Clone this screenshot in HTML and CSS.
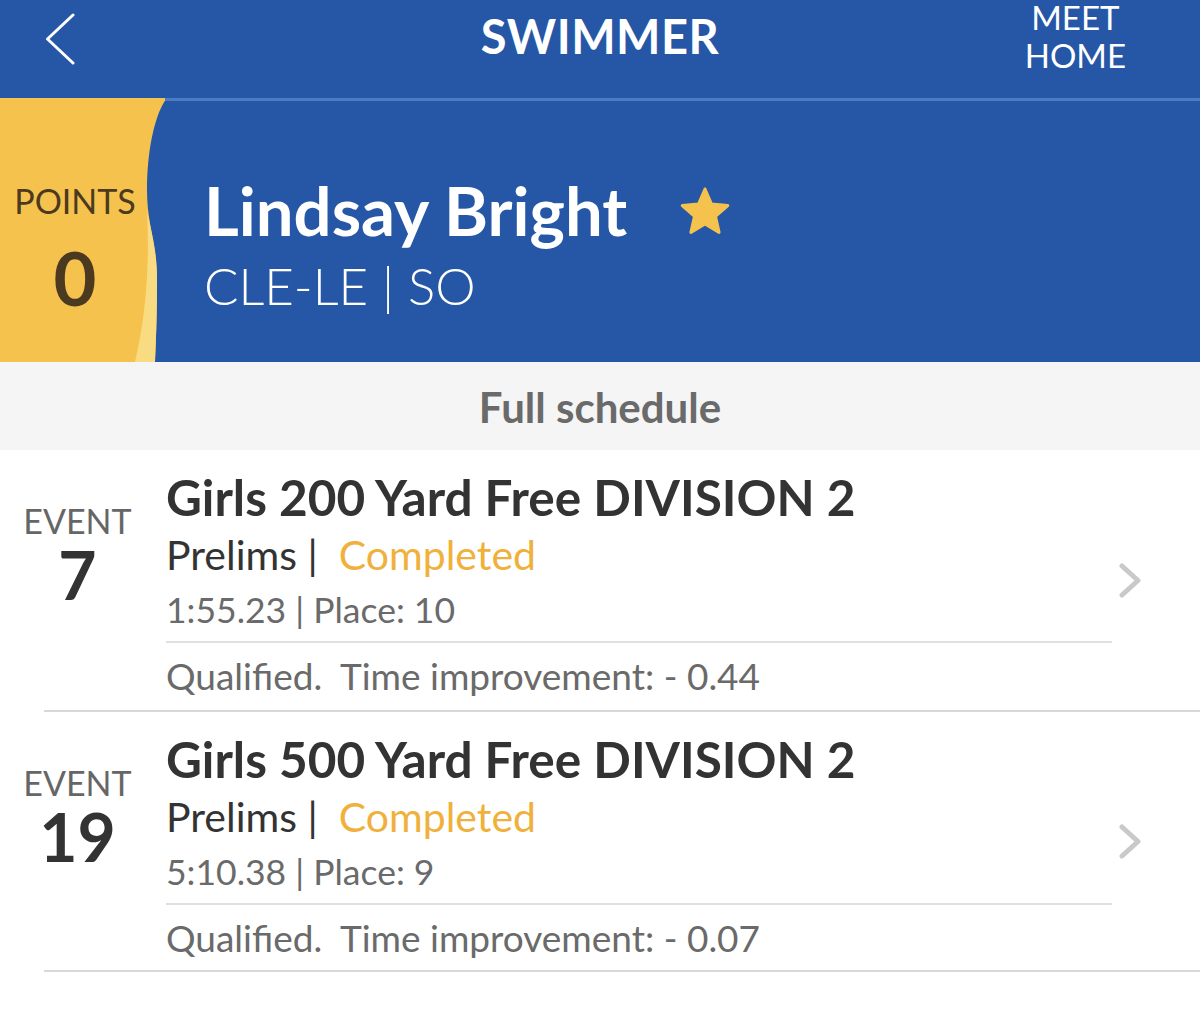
FILE: index.html
```html
<!DOCTYPE html>
<html lang="en">
<head>
  <meta charset="UTF-8" />
  <meta name="viewport" content="width=device-width, initial-scale=1.0"/>
  <title>Swimmer</title>
  <link rel="stylesheet" href="styles.css">
</head>
<body>

  <header class="topbar">
    <a class="back" href="#">
      <svg width="32" height="54" viewBox="0 0 32 54">
        <polyline points="29,2 3.5,26 29,50" fill="none" stroke="#fff" stroke-width="3" stroke-linecap="round" stroke-linejoin="round"/>
      </svg>
    </a>
    <h1 class="title">SWIMMER</h1>
    <a class="meet-home" href="#">MEET<br>HOME</a>
  </header>

  <section class="hero">
    <div class="points">
      <svg class="points-bg" width="165" height="264" viewBox="0 0 165 264">
        <path d="M0,0 H167 C155,15 147,52 147,92 C147,127 157,147 157,182 C157,217 156,242 155,264 H0 Z" fill="#f5c24e"/>
        <path d="M147,112 C152,137 157,152 157,182 C157,217 156,242 155,264 H135 C145,222 150,172 147,112 Z" fill="#f9dc82"/>
      </svg>
      <div class="points-label">POINTS</div>
      <div class="points-value">0</div>
    </div>
    <div class="swimmer">
      <div class="swimmer-name">
        Lindsay Bright
        <svg class="star" width="52" height="50" viewBox="0 0 52 50">
          <polygon points="26,2 32.5,17.1 48.8,18.6 36.5,29.4 40.1,45.4 26,37 11.9,45.4 15.5,29.4 3.2,18.6 19.5,17.1" fill="#f5c24e" stroke="#f5c24e" stroke-width="3" stroke-linejoin="round"/>
        </svg>
      </div>
      <div class="swimmer-team">CLE-LE | SO</div>
    </div>
  </section>

  <div class="schedule-bar">Full schedule</div>

  <ul class="events">
    <li class="event">
      <div class="event-num">
        <div class="event-label">EVENT</div>
        <div class="event-value">7</div>
      </div>
      <div class="event-info">
        <div class="event-title">Girls 200 Yard Free DIVISION 2</div>
        <div class="event-status">Prelims |&nbsp; <span class="done">Completed</span></div>
        <div class="event-time">1:55.23 | Place: 10</div>
        <div class="event-note">Qualified.&nbsp; Time improvement: - 0.44</div>
      </div>
      <div class="event-go">
        <svg width="26" height="36" viewBox="0 0 26 36">
          <polyline points="5,3 21,17.5 5,32" fill="none" stroke="#c9c9c9" stroke-width="5" stroke-linecap="round" stroke-linejoin="round"/>
        </svg>
      </div>
    </li>
    <li class="event">
      <div class="event-num">
        <div class="event-label">EVENT</div>
        <div class="event-value">19</div>
      </div>
      <div class="event-info">
        <div class="event-title">Girls 500 Yard Free DIVISION 2</div>
        <div class="event-status">Prelims |&nbsp; <span class="done">Completed</span></div>
        <div class="event-time">5:10.38 | Place: 9</div>
        <div class="event-note">Qualified.&nbsp; Time improvement: - 0.07</div>
      </div>
      <div class="event-go">
        <svg width="26" height="36" viewBox="0 0 26 36">
          <polyline points="5,3 21,17.5 5,32" fill="none" stroke="#c9c9c9" stroke-width="5" stroke-linecap="round" stroke-linejoin="round"/>
        </svg>
      </div>
    </li>
  </ul>

</body>
</html>
```

FILE: styles.css
```css
* {
  box-sizing: border-box;
}
body {
  font-family: Lato, "Open Sans", sans-serif;
  margin: 0;
  background: #fff;
  color: #333;
}

/* top bar */
.topbar {
  display: grid;
  grid-template-columns: 1fr auto 1fr;
  align-items: start;
  height: 98px;
  background: #2557a6;
  color: #fff;
}
.back {
  display: block;
  padding: 13px 0 0 44px;
  justify-self: start;
}
.back svg {
  display: block;
}
.title {
  margin: 0;
  font-size: 47px;
  font-weight: 700;
  line-height: 72px;
  letter-spacing: 0.5px;
}
.meet-home {
  justify-self: end;
  padding-right: 74px;
  margin-top: -2px;
  color: #fff;
  text-decoration: none;
  text-align: center;
  font-size: 33px;
  line-height: 38px;
}

/* swimmer card */
.hero {
  display: flex;
  height: 264px;
  background: linear-gradient(#4b7cc6 0 3px, #2557a6 3px);
  color: #fff;
}
.points {
  position: relative;
  width: 150px;
  padding-top: 80px;
  text-align: center;
  color: #4b3a1f;
}
.points-bg {
  position: absolute;
  top: 0;
  left: 0;
}
.points-label, .points-value {
  position: relative;
}
.points-label {
  font-size: 34px;
  line-height: 46px;
}
.points-value {
  font-size: 74px;
  font-weight: 700;
  line-height: 108px;
}
.swimmer {
  padding: 74px 0 0 54px;
}
.swimmer-name {
  display: flex;
  align-items: center;
  gap: 52px;
  font-size: 67px;
  font-weight: 700;
  line-height: 76px;
}
.star {
  margin-top: 4px;
}
.swimmer-team {
  font-size: 51px;
  font-weight: 300;
  line-height: 76px;
}

.schedule-bar {
  height: 88px;
  background: #f5f5f5;
  color: #6a6a6a;
  text-align: center;
  font-size: 42px;
  font-weight: 700;
  line-height: 90px;
}

/* event rows */
.events {
  list-style: none;
  margin: 0;
  padding: 0;
}
.event {
  display: flex;
  height: 262px;
  background: linear-gradient(#d8d8d8, #d8d8d8) no-repeat 44px 100% / calc(100% - 44px) 2px;
}
.event + .event {
  height: 260px;
}
.event-num {
  width: 155px;
  padding-top: 53px;
  text-align: center;
}
.event-label {
  color: #666;
  font-size: 34px;
  line-height: 36px;
}
.event-value {
  font-size: 66px;
  font-weight: 700;
  line-height: 72px;
}
.event-info {
  flex: 1;
  margin-left: 11px;
  padding-top: 20px;
}
.event-title {
  font-size: 49.5px;
  font-weight: 700;
  line-height: 54px;
}
.event-status {
  font-size: 41px;
  line-height: 62px;
}
.done {
  color: #f0b13c;
}
.event-time {
  color: #6a6a6a;
  font-size: 35.5px;
  line-height: 48px;
  padding-bottom: 7px;
  border-bottom: 2px solid #e0e0e0;
}
.event-note {
  color: #6a6a6a;
  font-size: 37px;
  line-height: 66px;
}
.event-go {
  width: 88px;
  display: flex;
  align-items: center;
  padding-left: 5px;
}
.event-go svg {
  display: block;
}
```
